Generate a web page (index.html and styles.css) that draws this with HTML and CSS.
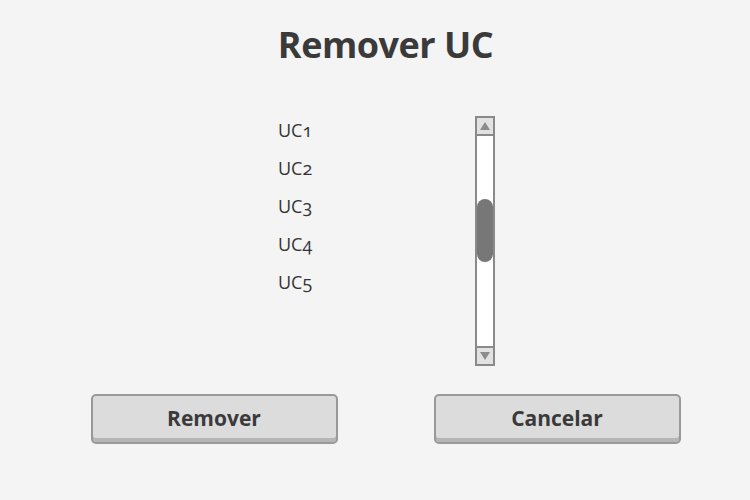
FILE: index.html
```html
<!DOCTYPE html>
<html lang="pt">
<head>
<meta charset="utf-8">
<title>Remover UC</title>
<link rel="stylesheet" href="styles.css">
</head>
<body>
<div class="page">
  <h1 class="title">Remover UC</h1>
  <div class="picker">
    <ul class="items">
      <li class="item">UC1</li>
      <li class="item">UC2</li>
      <li class="item">UC3</li>
      <li class="item">UC4</li>
      <li class="item">UC5</li>
    </ul>
    <div class="scrollbar">
      <div class="arrow arrow-up"><span class="tri tri-up"></span></div>
      <div class="track"><div class="thumb"></div></div>
      <div class="arrow arrow-down"><span class="tri tri-down"></span></div>
    </div>
  </div>
  <div class="actions">
    <button class="btn">Remover</button>
    <button class="btn">Cancelar</button>
  </div>
</div>
</body>
</html>
```

FILE: styles.css
```css
* { box-sizing: border-box; }
html, body { margin: 0; padding: 0; }
body {
  background: #f4f4f4;
  font-family: "Open Sans", "Noto Sans", sans-serif;
  color: #333;
  width: 750px;
  height: 500px;
  overflow: hidden;
}
.page {
  width: 750px;
  height: 500px;
  padding-left: 21px;
  display: flex;
  flex-direction: column;
  align-items: center;
}
.title {
  margin: 22px 0 0 0;
  font-size: 36px;
  line-height: 46px;
  font-weight: 700;
  color: #3a3a3a;
  letter-spacing: -0.5px;
}
.picker {
  margin: 48px 0 0 2px;
  width: 217px;
  height: 250px;
  display: flex;
  justify-content: space-between;
}
.items {
  list-style: none;
  margin: 0;
  padding: 0;
  display: flex;
  flex-direction: column;
  gap: 10px;
  font-variant-numeric: oldstyle-nums;
}
.item {
  font-size: 18px;
  line-height: 28px;
  height: 28px;
  color: #333;
  font-weight: 500;
}
.scrollbar {
  width: 20px;
  height: 250px;
  border: 2px solid #8a8a8a;
  background: #fff;
  display: flex;
  flex-direction: column;
}
.arrow {
  height: 18px;
  background: #e2e2e2;
  display: flex;
  align-items: center;
  justify-content: center;
}
.arrow-up { border-bottom: 2px solid #8a8a8a; }
.arrow-down { border-top: 2px solid #8a8a8a; }
.tri {
  width: 0;
  height: 0;
  border-left: 5px solid transparent;
  border-right: 5px solid transparent;
}
.tri-up { border-bottom: 8px solid #8c8c8c; }
.tri-down { border-top: 8px solid #8c8c8c; }
.track {
  flex: 1;
  padding-top: 63px;
}
.thumb {
  width: 16px;
  height: 63px;
  border-radius: 8px;
  background: #777;
}
.actions {
  margin-top: 28px;
  display: flex;
  gap: 96px;
}
.btn {
  width: 247px;
  height: 50px;
  border: 2px solid #999;
  border-radius: 5px;
  background: #dcdcdc;
  box-shadow: inset 0 -4px 0 #b5b5b5;
  font-family: "Open Sans", "Noto Sans", sans-serif;
  font-size: 21px;
  font-weight: 700;
  color: #3a3a3a;
  padding: 0 0 2px 0;
}
```
